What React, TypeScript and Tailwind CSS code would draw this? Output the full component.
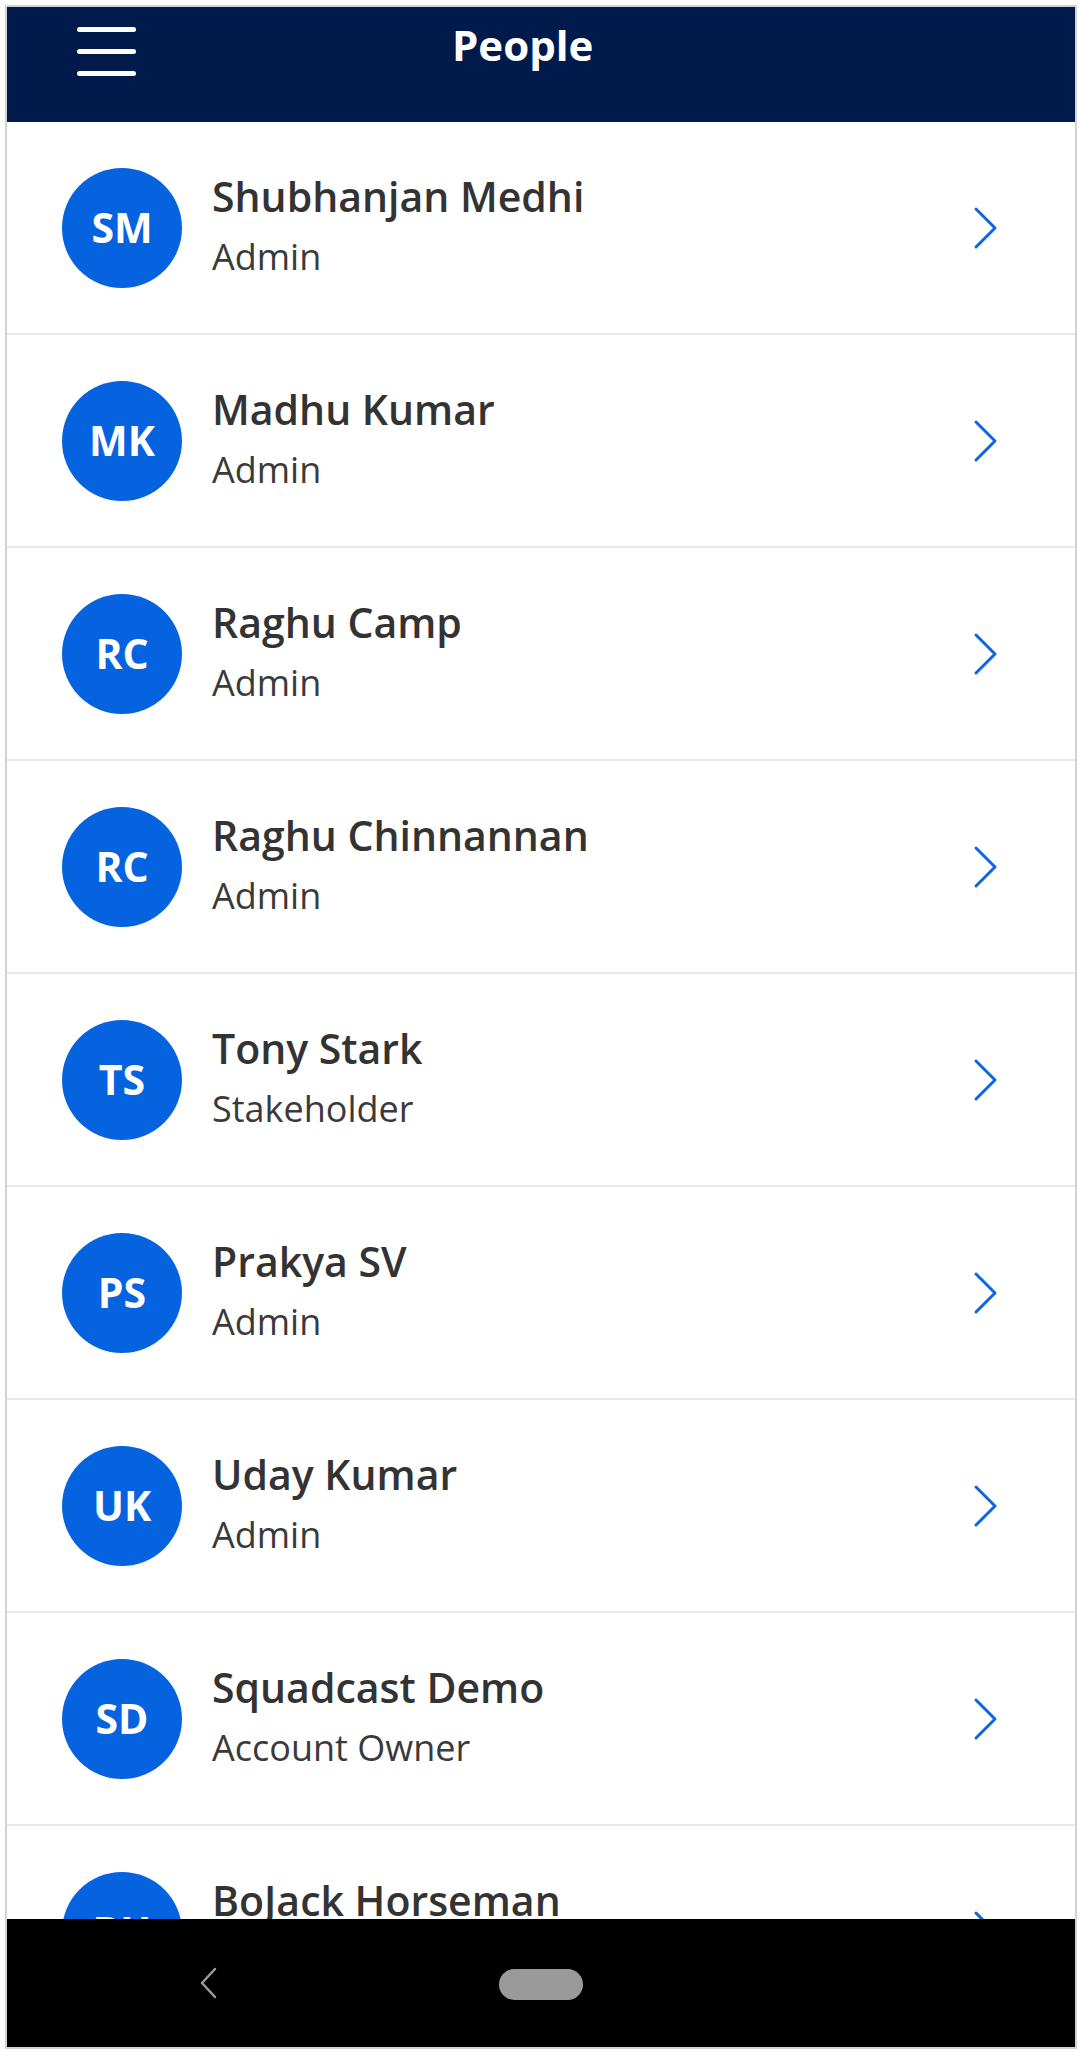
import React from "react";

const people = [
  { initials: "SM", name: "Shubhanjan Medhi", role: "Admin" },
  { initials: "MK", name: "Madhu Kumar", role: "Admin" },
  { initials: "RC", name: "Raghu Camp", role: "Admin" },
  { initials: "RC", name: "Raghu Chinnannan", role: "Admin" },
  { initials: "TS", name: "Tony Stark", role: "Stakeholder" },
  { initials: "PS", name: "Prakya SV", role: "Admin" },
  { initials: "UK", name: "Uday Kumar", role: "Admin" },
  { initials: "SD", name: "Squadcast Demo", role: "Account Owner" },
  { initials: "BH", name: "BoJack Horseman", role: "Admin" },
];

function Chevron() {
  return (
    <svg width="25" height="44" viewBox="0 0 25 44" fill="none" className="shrink-0">
      <polyline
        points="3,3 22,22 3,41"
        stroke="#0a66e3"
        strokeWidth="3"
        strokeLinecap="round"
        strokeLinejoin="round"
      />
    </svg>
  );
}

function Row({ initials, name, role }: { initials: string; name: string; role: string }) {
  return (
    <div className="flex h-[213px] shrink-0 items-center border-b-2 border-[#e8e9eb] pl-[55px] pr-[77px]">
      <div className="flex h-[120px] w-[120px] shrink-0 items-center justify-center rounded-full bg-[#0563e0]">
        <span className="text-[41px] font-bold leading-none text-white">{initials}</span>
      </div>
      <div className="ml-[30px] flex flex-1 flex-col pb-[6px]">
        <span className="text-[41px] font-semibold leading-[48px] text-[#333333]">{name}</span>
        <span className="mt-[17px] text-[36px] leading-[40px] text-[#3a3a3a]">{role}</span>
      </div>
      <Chevron />
    </div>
  );
}

export default function App() {
  return (
    <div
      className="h-[2053px] w-[1082px] bg-white px-[5px] pt-[5px] pb-[4px]"
      style={{ fontFamily: '"Open Sans", "Noto Sans", sans-serif' }}
    >
      <div className="flex h-full flex-col overflow-hidden border-2 border-[#d2d2d2]">
        <div className="flex h-[115px] shrink-0 items-start bg-[#001b4b] pl-[70px] pt-[19px]">
          <div className="flex h-[50px] w-[59px] flex-col justify-between pt-[1px]">
            <div className="h-[5px] w-full rounded-full bg-white" />
            <div className="h-[5px] w-full rounded-full bg-white" />
            <div className="h-[5px] w-full rounded-full bg-white" />
          </div>
          <span className="ml-[316px] mt-[-9px] text-[42px] font-bold leading-[56px] text-white">People</span>
        </div>
        <div className="flex min-h-0 flex-1 flex-col overflow-hidden bg-white">
          {people.map((p, i) => (
            <Row key={i} {...p} />
          ))}
        </div>
        <div className="flex h-[128px] shrink-0 items-center bg-black pl-[192px]">
          <svg width="19" height="32" viewBox="0 0 19 32" fill="none">
            <polyline
              points="16,2 3,16 16,30"
              stroke="#9a9a9a"
              strokeWidth="2.5"
              strokeLinecap="round"
              strokeLinejoin="round"
            />
          </svg>
          <div className="ml-[281px] mt-[3px] h-[31px] w-[84px] rounded-full bg-[#9a9a9a]" />
        </div>
      </div>
    </div>
  );
}
